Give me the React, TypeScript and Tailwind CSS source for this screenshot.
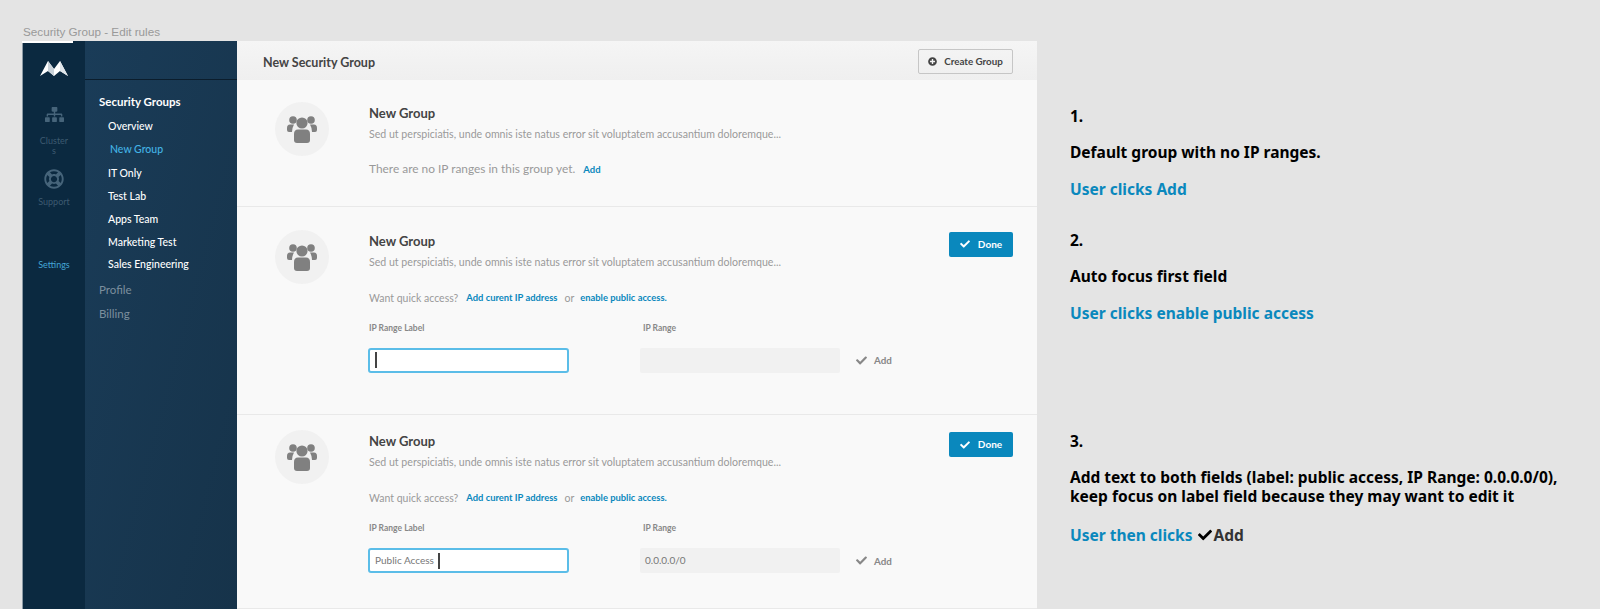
import React from "react";
import { FaCheck, FaPlusCircle, FaSitemap, FaRegLifeRing } from "react-icons/fa";

const lato = "font-['Lato','Liberation_Sans',sans-serif]";

function Logo() {
  return (
    <svg width="28" height="17" viewBox="0 0 28 17">
      <path d="M0 16 L8 1 L14 9 L20 1 L28 16 L20 11 L14 16 L8 11 Z" fill="#fff" />
      <path d="M8 1 L14 9 L14 16 L8 11 Z" fill="#c9d2d9" />
      <path d="M20 1 L28 16 L20 11 Z" fill="#dfe5ea" />
    </svg>
  );
}

function Users() {
  return (
    <svg width="30" height="28" viewBox="0 0 30 28" fill="#808080">
      <circle cx="6" cy="5" r="3.8" />
      <circle cx="24" cy="5" r="3.8" />
      <path d="M0 13 Q0 9.5 3 9.5 L7 9.5 Q5 13 5 17 L2 17 Q0 17 0 15 Z" />
      <path d="M30 13 Q30 9.5 27 9.5 L23 9.5 Q25 13 25 17 L28 17 Q30 17 30 15 Z" />
      <circle cx="15" cy="8" r="5.6" />
      <path d="M7 19 Q7 14.5 11 14.5 L19 14.5 Q23 14.5 23 19 L23 25 Q23 28 20 28 L10 28 Q7 28 7 25 Z" />
    </svg>
  );
}

function Avatar() {
  return (
    <div className="w-[54px] h-[54px] rounded-full bg-[#f1f1f1] flex items-center justify-center">
      <Users />
    </div>
  );
}

function Heading() {
  return (
    <>
      <div className="text-[13px] leading-[16px] font-bold text-[#444]">New Group</div>
      <div className="mt-[6px] text-[10.6px] leading-[14px] text-[#999]">
        Sed ut perspiciatis, unde omnis iste natus error sit voluptatem accusantium doloremque...
      </div>
    </>
  );
}

function DoneButton() {
  return (
    <button className="w-[64px] h-[25px] rounded-[2px] bg-[#0a88bd] text-white text-[10px] font-bold flex items-center justify-center gap-[8px]">
      <FaCheck className="text-[10px]" />
      Done
    </button>
  );
}

function Caret() {
  return <span className="inline-block w-[2px] h-[16px] bg-[#444]" />;
}

function Form({ label, range }: { label?: string; range?: string }) {
  return (
    <>
      <div className="mt-[22px] text-[10.5px] leading-[14px] text-[#999] flex">
        <span>Want quick access?</span>
        <span className="ml-[8px] text-[#0a88bd] font-bold text-[9.4px]">Add curent IP address</span>
        <span className="ml-[7px]">or</span>
        <span className="ml-[6px] text-[#0a88bd] font-bold text-[9.4px]">enable public access.</span>
      </div>
      <div className="mt-[17px] flex text-[8.5px] leading-[12px] font-bold text-[#888]">
        <div className="w-[274px]">IP Range Label</div>
        <div>IP Range</div>
      </div>
      <div className="mt-[14px] flex items-center">
        <div className="-ml-[1px] w-[201px] h-[25px] rounded-[3px] bg-white border-2 border-[#5bbde8] flex items-center pl-[5px] gap-[4px] text-[10px] text-[#777]">
          {label ? <span>{label}</span> : null}
          <Caret />
        </div>
        <div className="ml-[71px] w-[200px] h-[25px] rounded-[2px] bg-[#f1f1f1] flex items-center pl-[5px] text-[10px] text-[#777]">
          {range}
        </div>
        <div className="ml-[16px] flex items-center gap-[7px] text-[#888] text-[9.8px] font-bold">
          <FaCheck className="text-[11px]" />
          Add
        </div>
      </div>
    </>
  );
}

function Section({ height, children, done }: { height: string; children: React.ReactNode; done?: boolean }) {
  return (
    <section className={`${height} border-b border-[#e9e9e9] pl-[38px] pr-[24px] flex`}>
      <Avatar />
      <div className="ml-[40px] flex-1">{children}</div>
      {done ? <div className="pt-[2px]"><DoneButton /></div> : null}
    </section>
  );
}

function NavItem({ children, active, className }: { children: React.ReactNode; active?: boolean; className?: string }) {
  return (
    <div className={`text-[10.5px] leading-[14px] font-medium ${active ? "text-[#43b4e6] font-bold" : "text-white"} ${className ?? ""}`}>
      {children}
    </div>
  );
}

function Rail() {
  return (
    <aside className="w-[63px] shrink-0 bg-[#0b2940] border-l border-[#8c9aa5] flex flex-col items-center pt-[19px]">
      <Logo />
      <FaSitemap className="mt-[28px] text-[19px] text-[#46647a]" />
      <div className="mt-[12px] w-[30px] text-center break-all text-[9px] leading-[10px] text-[#3d5a70]">Clusters</div>
      <FaRegLifeRing className="mt-[13px] text-[20px] text-[#46647a]" />
      <div className="mt-[7px] text-[9px] leading-[12px] text-[#3d5a70]">Support</div>
      <div className="mt-[51px] text-[9px] leading-[12px] text-[#43a5d5]">Settings</div>
    </aside>
  );
}

function SubNav() {
  return (
    <nav className="w-[152px] shrink-0 bg-gradient-to-br from-[#1a3c58] to-[#16334a] flex flex-col">
      <div className="h-[39px] shrink-0 border-b border-[#0b1d2c]" />
      <div className="pl-[14px] pt-[15px]">
        <div className="text-[11.5px] leading-[14px] font-bold text-white">Security Groups</div>
        <NavItem className="ml-[9px] mt-[10px]">Overview</NavItem>
        <NavItem active className="ml-[11px] mt-[9px]">New Group</NavItem>
        <NavItem className="ml-[9px] mt-[10px]">IT Only</NavItem>
        <NavItem className="ml-[9px] mt-[9px]">Test Lab</NavItem>
        <NavItem className="ml-[9px] mt-[9px]">Apps Team</NavItem>
        <NavItem className="ml-[9px] mt-[9px]">Marketing Test</NavItem>
        <NavItem className="ml-[9px] mt-[8px]">Sales Engineering</NavItem>
        <div className="mt-[11px] text-[11.5px] leading-[16px] text-[#7c8f9e]">Profile</div>
        <div className="mt-[8px] text-[11.5px] leading-[16px] text-[#7c8f9e]">Billing</div>
      </div>
    </nav>
  );
}

function Main() {
  return (
    <main className="flex-1 bg-[#f9f9f9] flex flex-col">
      <header className="h-[39px] shrink-0 bg-gradient-to-b from-[#f5f5f5] to-[#efefef] pl-[26px] pr-[24px] flex items-center justify-between">
        <h1 className="mt-[5px] text-[12.5px] font-bold text-[#444]">New Security Group</h1>
        <button className="w-[95px] h-[25px] mt-[1px] rounded-[2px] border border-[#c6c6c6] text-[9.8px] font-bold text-[#444] flex items-center justify-center gap-[7px]">
          <FaPlusCircle className="text-[9px]" />
          Create Group
        </button>
      </header>
      <Section height="h-[127px] pt-[22px]">
        <div className="pt-[3px]">
          <Heading />
          <div className="mt-[19px] flex items-baseline text-[11.9px] leading-[18px] text-[#999]">
            <span>There are no IP ranges in this group yet.</span>
            <span className="ml-[8px] text-[9.5px] font-bold text-[#0a88bd]">Add</span>
          </div>
        </div>
      </Section>
      <Section height="h-[209px] pt-[23px]" done>
        <div className="pt-[3px]">
          <Heading />
          <Form />
        </div>
      </Section>
      <Section height="h-[194px] pt-[15px]" done>
        <div className="pt-[3px]">
          <Heading />
          <Form label="Public Access" range="0.0.0.0/0" />
        </div>
      </Section>
    </main>
  );
}

function Note({ n, body, action, className, gap }: { n: string; body: React.ReactNode; action: React.ReactNode; className?: string; gap: string }) {
  return (
    <div className={className}>
      <div className="text-[15.5px] leading-[20px] font-bold text-black">{n}</div>
      <div className="mt-[17px] text-[15.5px] leading-[19px] font-bold text-black">{body}</div>
      <div className={`${gap} text-[15.5px] leading-[20px] font-bold text-[#0a88bd]`}>{action}</div>
    </div>
  );
}

export default function App() {
  return (
    <div className={`${lato} w-[1600px] h-[609px] overflow-hidden bg-[#e4e4e4]`}>
      <div className="h-[41px] pl-[23px] pt-[24px] text-[11.7px] leading-[15px] font-['Liberation_Sans',sans-serif] text-[#999]">
        Security Group - Edit rules
      </div>
      <div className="flex h-[568px]">
        <div className="ml-[22px] w-[1015px] shrink-0 flex relative">
          <div className="absolute left-0 top-0 w-[51px] h-[2px] bg-white" />
          <Rail />
          <SubNav />
          <Main />
        </div>
        <div className="ml-[33px] font-['Noto_Sans',sans-serif]">
          <Note
            className="pt-[65px]"
            gap="mt-[17px]"
            n="1."
            body="Default group with no IP ranges."
            action="User clicks Add"
          />
          <Note
            className="mt-[31px]"
            gap="mt-[17px]"
            n="2."
            body="Auto focus first field"
            action="User clicks enable public access"
          />
          <Note
            className="mt-[108px]"
            gap="mt-[19px]"
            n="3."
            body={<>Add text to both fields (label: public access, IP Range: 0.0.0.0/0),<br />keep focus on label field because they may want to edit it</>}
            action={
              <span className="flex items-center gap-[5px]">
                User then clicks
                <span className="flex items-center gap-[2px] text-[#333]"><FaCheck className="text-[14px] text-black" />Add</span>
              </span>
            }
          />
        </div>
      </div>
    </div>
  );
}
